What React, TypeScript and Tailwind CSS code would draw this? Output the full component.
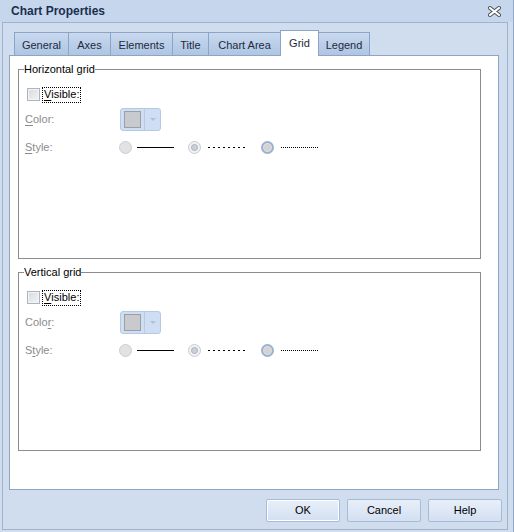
import React from 'react';

const tabs = [
  { label: 'General', w: 'w-[54px]' },
  { label: 'Axes', w: 'w-[42px]' },
  { label: 'Elements', w: 'w-[62px]' },
  { label: 'Title', w: 'w-[36px]' },
  { label: 'Chart Area', w: 'w-[72px]' },
];

const CloseIcon = () => (
  <svg width="13" height="11" viewBox="0 0 13 11">
    <path d="M2 2 L11 9 M11 2 L2 9" stroke="#4b4f55" strokeWidth="4" strokeLinecap="square" />
    <path d="M2 2 L11 9 M11 2 L2 9" stroke="#ffffff" strokeWidth="2" strokeLinecap="square" />
  </svg>
);

const Checkbox = () => (
  <div className="w-[13px] h-[13px] border border-[#a7b4c7] bg-[#f4f4f4] p-[1px]">
    <div className="w-full h-full bg-gradient-to-br from-[#dcdcdc] to-[#f2f2f2]" />
  </div>
);

const ColorButton = () => (
  <div className="w-[41px] h-[23px] rounded-[3px] border border-[#b5c9e5] bg-[#cfdef2] flex items-center">
    <div className="ml-[3px] w-[17px] h-[17px] border border-[#9a9ea5] bg-[#c8cacd]" />
    <div className="ml-[3px] h-full border-l border-[#b8cbe6] flex-1 flex items-center justify-center">
      <div className="w-0 h-0 border-l-[3px] border-r-[3px] border-t-[3px] border-l-transparent border-r-transparent border-t-[#b4bfd1]" />
    </div>
  </div>
);

const Radio = ({ kind }: { kind: 'plain' | 'checked' | 'hover' }) => {
  if (kind === 'checked') {
    return (
      <div className="w-[13px] h-[13px] rounded-full border border-[#c3ccd9] bg-[#f2f2f2] flex items-center justify-center">
        <div className="w-[7px] h-[7px] rounded-full border border-[#aab2be] bg-[#cdd0d5]" />
      </div>
    );
  }
  if (kind === 'hover') {
    return (
      <div className="w-[13px] h-[13px] rounded-full border-2 border-[#9bb0d2] bg-[#e0e0e0] flex items-center justify-center">
        <div className="w-[7px] h-[7px] rounded-full bg-[#d3d3d3]" />
      </div>
    );
  }
  return <div className="w-[13px] h-[13px] rounded-full border border-[#c6cfdc] bg-[#e2e2e2]" />;
};

const GridGroup = ({
  title,
  height,
  colorKey,
  styleKey,
}: {
  title: string;
  height: string;
  colorKey: number;
  styleKey: number;
}) => {
  const underline = (text: string, idx: number) => (
    <>
      {text.slice(0, idx)}
      <span className="underline underline-offset-[2px]">{text[idx]}</span>
      {text.slice(idx + 1)}
    </>
  );

  return (
    <fieldset className={`ml-[8px] mt-[7px] w-[463px] ${height} border border-[#8c8c8c] pl-[6px]`}>
      <legend className="ml-[-1px] px-0 leading-[13px] text-black">{title}</legend>
      <div className="mt-[10px] h-[17px] flex items-center pl-[2px]">
        <Checkbox />
        <div className="ml-[2px] h-[16px] px-[1px] border border-dotted border-black flex items-center text-black">
          <span className="underline underline-offset-[2px]">V</span>isible:
        </div>
      </div>
      <div className="mt-[5px] h-[23px] flex items-center">
        <div className="w-[95px] text-[#8b8b8b]">{underline('Color:', colorKey)}</div>
        <ColorButton />
      </div>
      <div className="mt-[8px] h-[17px] flex items-center">
        <div className="w-[94px] text-[#8b8b8b]">{underline('Style:', styleKey)}</div>
        <Radio kind="plain" />
        <div className="ml-[5px] w-[37px] h-[1px] bg-black" />
        <div className="ml-[14px]">
          <Radio kind="checked" />
        </div>
        <div className="ml-[7px] w-[38px] h-[1px] bg-[repeating-linear-gradient(90deg,#000_0_2px,transparent_2px_5px)]" />
        <div className="ml-[15px]">
          <Radio kind="hover" />
        </div>
        <div className="ml-[7px] w-[38px] h-[1px] bg-[repeating-linear-gradient(90deg,#000_0_1px,transparent_1px_2px)]" />
      </div>
    </fieldset>
  );
};

const DialogButton = ({ label, focused }: { label: string; focused?: boolean }) => (
  <button
    className={`w-[74px] h-[23px] rounded-[2px] border border-[#a8bbd6] bg-gradient-to-b from-[#e8eff9] to-[#d3e0f2] text-black ${
      focused ? 'shadow-[inset_0_0_0_1px_#ffffff]' : ''
    }`}
  >
    {label}
  </button>
);

export default function App() {
  return (
    <div className="w-[514px] h-[532px] bg-[#d0ddef] border-r border-[#93a9c9] font-['Liberation_Sans',Arial,sans-serif] text-[11px] overflow-hidden">
      <div className="h-[22px] bg-[#c6d7ed] flex items-center justify-between pl-[11px] pr-[12px]">
        <span className="font-bold text-[12px] text-[#1b2f4f]">Chart Properties</span>
        <CloseIcon />
      </div>
      <div className="ml-[2px] w-[506px] h-[508px] border border-[#9fb3cf] flex flex-col">
        <div className="ml-[11px] mt-[7px] h-[26px] -mb-px flex items-end relative z-10">
          {tabs.map((t) => (
            <div
              key={t.label}
              className={`${t.w} h-[24px] pt-[2px] border-l border-t border-b border-[#8ba4c8] bg-gradient-to-b from-[#c9d9ee] to-[#afc5e3] flex items-center justify-center text-[#1c2b40]`}
            >
              {t.label}
            </div>
          ))}
          <div className="w-[39px] h-[26px] border-l border-r border-t border-[#8ba4c8] bg-white flex items-center justify-center text-[#1c2b40]">
            Grid
          </div>
          <div className="w-[51px] h-[24px] pt-[2px] border-r border-t border-b border-[#8ba4c8] bg-gradient-to-b from-[#c9d9ee] to-[#afc5e3] flex items-center justify-center text-[#1c2b40]">
            Legend
          </div>
        </div>
        <div className="ml-[6px] w-[490px] h-[435px] bg-white border border-[#8da4c5]">
          <GridGroup title="Horizontal grid" height="h-[196px]" colorKey={0} styleKey={0} />
          <GridGroup title="Vertical grid" height="h-[185px]" colorKey={4} styleKey={1} />
        </div>
        <div className="mt-[9px] pr-[5px] flex justify-end gap-[7px]">
          <DialogButton label="OK" focused />
          <DialogButton label="Cancel" />
          <DialogButton label="Help" />
        </div>
      </div>
    </div>
  );
}
